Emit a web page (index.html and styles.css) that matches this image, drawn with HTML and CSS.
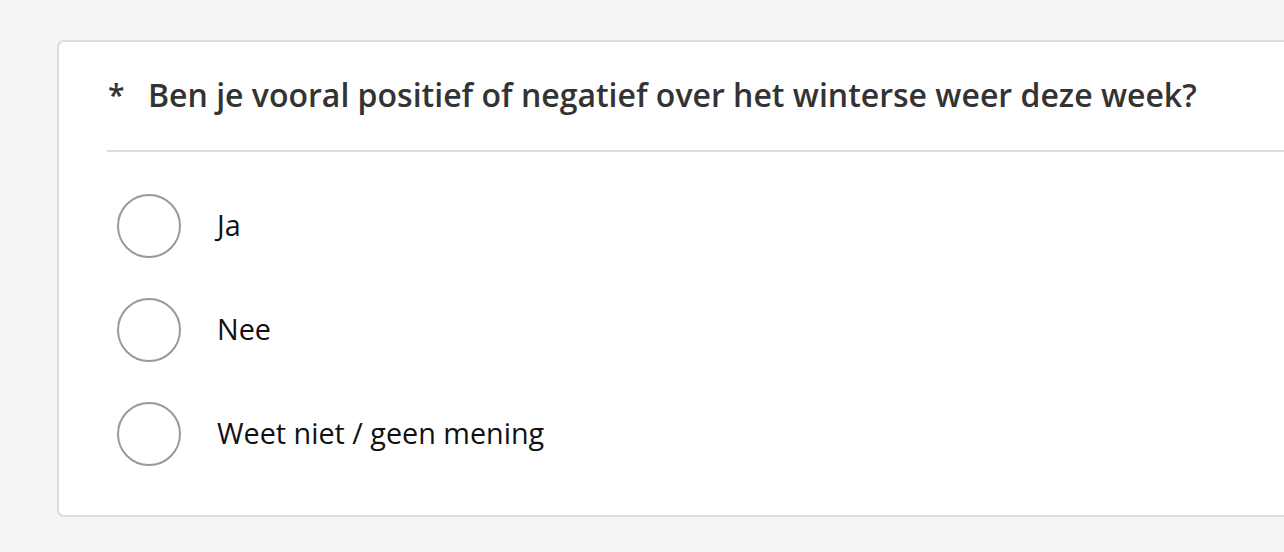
FILE: index.html
```html
<!DOCTYPE html>
<html lang="nl">
<head>
<meta charset="utf-8">
<link rel="stylesheet" href="styles.css">
</head>
<body>
<div class="page">
  <section class="card">
    <h2 class="question"><span class="req">*</span><span class="qtext">Ben je vooral positief of negatief over het winterse weer deze week?</span></h2>
    <div class="options">
      <label class="option"><span class="radio"></span><span class="label">Ja</span></label>
      <label class="option"><span class="radio"></span><span class="label">Nee</span></label>
      <label class="option"><span class="radio"></span><span class="label">Weet niet / geen mening</span></label>
    </div>
  </section>
</div>
</body>
</html>
```
FILE: styles.css
```css
html, body {
  margin: 0;
  padding: 0;
  background: #f5f5f5;
  overflow: hidden;
  width: 1284px;
  height: 552px;
}
.page {
  padding: 40px 0 0 57px;
  font-family: "Open Sans", "Noto Sans", sans-serif;
}
.card {
  width: 1300px;
  height: 477px;
  box-sizing: border-box;
  background: #fff;
  border: 2px solid #dddbe5;
  border-radius: 7px;
  padding: 0 0 0 48px;
}
.question {
  margin: 0;
  height: 110px;
  box-sizing: border-box;
  padding-top: 31px;
  border-bottom: 2px solid #dddbe5;
  display: flex;
  font-size: 32px;
  font-weight: 600;
  color: #333;
  line-height: 44px;
}
.req {
  width: 40px;
  flex: none;
  padding-left: 1px;
  font-size: 30px;
}
.options {
  display: flex;
  flex-direction: column;
  padding: 42px 0 0 10px;
  gap: 40px;
}
.option {
  display: flex;
  align-items: center;
  height: 64px;
}
.radio {
  width: 64px;
  height: 64px;
  box-sizing: border-box;
  border: 2px solid #999;
  border-radius: 50%;
  flex: none;
}
.label {
  margin-left: 36px;
  padding-bottom: 3px;
  font-size: 28.75px;
  color: #111;
}
```
